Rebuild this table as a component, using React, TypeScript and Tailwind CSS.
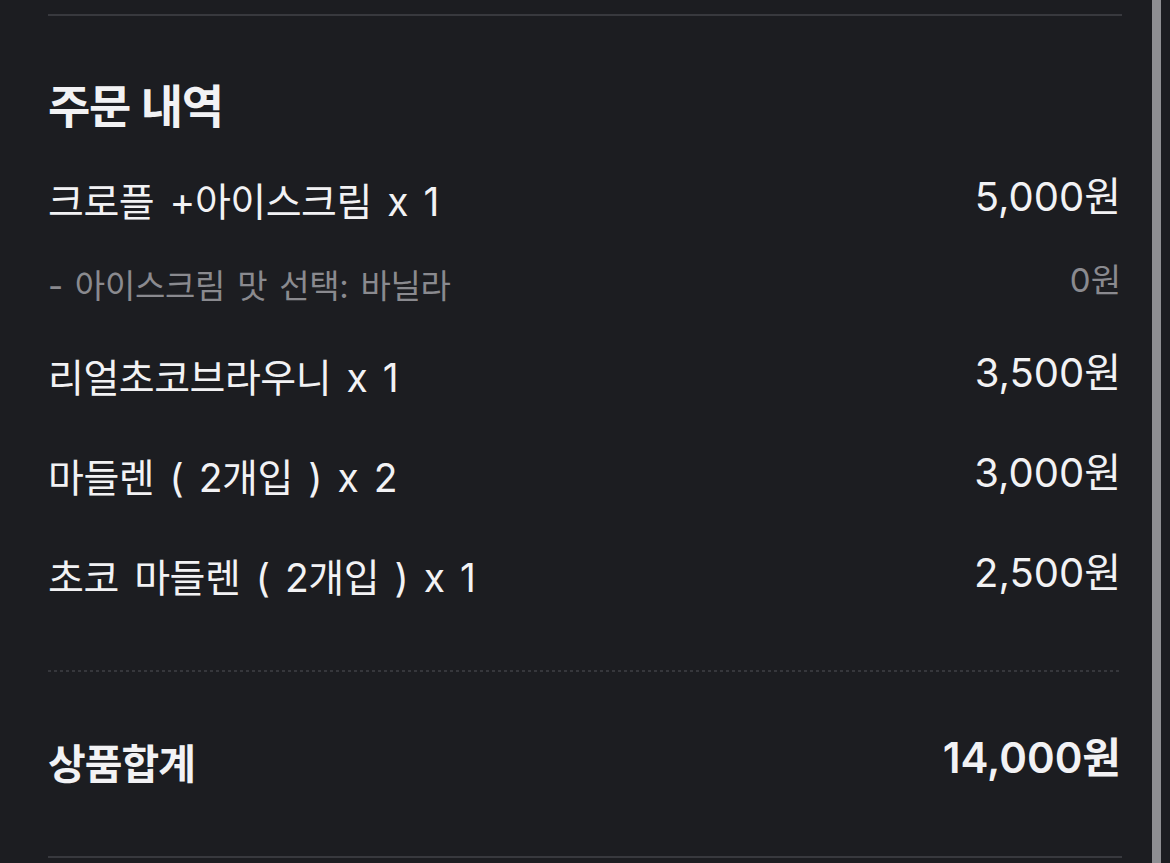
import React from "react";

const font = { fontFamily: 'Inter, "Noto Sans CJK KR", sans-serif' };

function Row({ name, price }: { name: string; price: string }) {
  return (
    <div className="flex items-start justify-between">
      <div className="text-[39px] leading-[56px] tracking-[-0.5px] [word-spacing:5px] text-[#f2f2f4]">{name}</div>
      <div className="mr-[1px] text-[40px] leading-[46px] text-[#f2f2f4]">{price}</div>
    </div>
  );
}

export default function App() {
  return (
    <div className="relative min-h-screen bg-[#1c1d21] overflow-hidden" style={font}>
      <div className="px-12 pt-[14px] pb-[6px]">
        <div className="h-[2px] bg-[#38393e]" />
        <h2 className="mt-[60px] text-[46px] leading-[60px] font-semibold tracking-[-1.2px] text-[#f2f2f4]">주문 내역</h2>
        <div className="mt-[38px]">
          <Row name="크로플 +아이스크림 x 1" price="5,000원" />
        </div>
        <div className="mt-[34px] flex items-start justify-between">
          <div className="text-[33px] leading-[44px] tracking-[-0.3px] [word-spacing:3px] text-[#8a8a8f]">- 아이스크림 맛 선택: 바닐라</div>
          <div className="mr-[1px] text-[33px] leading-[32px] text-[#8a8a8f]">0원</div>
        </div>
        <div className="mt-[42px]">
          <Row name="리얼초코브라우니 x 1" price="3,500원" />
        </div>
        <div className="mt-[44px]">
          <Row name="마들렌 ( 2개입 ) x 2" price="3,000원" />
        </div>
        <div className="mt-[44px]">
          <Row name="초코 마들렌 ( 2개입 ) x 1" price="2,500원" />
        </div>
        <div className="mt-[64px] h-[2px] bg-[repeating-linear-gradient(to_right,#36373c_0_3px,transparent_3px_6px)]" />
        <div className="mt-[64px] flex items-start justify-between">
          <div className="text-[41px] leading-[56px] font-semibold tracking-[-1px] text-[#f2f2f4]">상품합계</div>
          <div className="mr-[1px] text-[42px] leading-[44px] font-semibold text-[#f2f2f4]">14,000원</div>
        </div>
        <div className="mt-[64px] h-[2px] bg-[#38393e]" />
      </div>
      <div className="absolute top-0 bottom-0 right-[9px] w-[9px] bg-[#8e8e92]" />
    </div>
  );
}
